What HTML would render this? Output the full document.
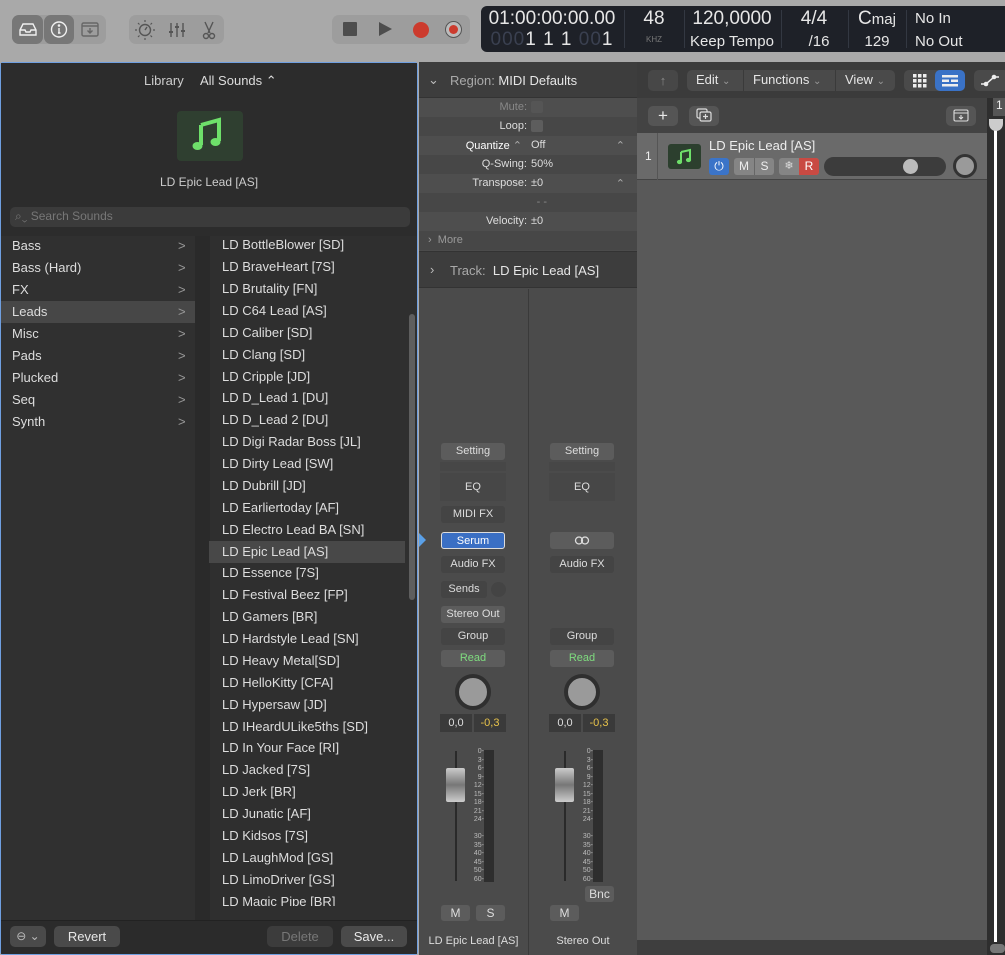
<!DOCTYPE html>
<html><head><meta charset="utf-8"><style>
*{box-sizing:border-box;margin:0;padding:0}
body{width:1005px;height:955px;overflow:hidden;background:#a9a9a9;font-family:"Liberation Sans",sans-serif;position:relative;color:#ddd}
.a{position:absolute}
.grp{position:absolute;background:#9d9d9d;border-radius:7px}
.lcd{position:absolute;left:481px;top:6px;width:530px;height:46px;background:#1e2128;border-radius:6px;color:#e6e6e6}
.lcd .c{position:absolute;text-align:center;font-size:17px}
.sep{position:absolute;top:4px;width:1px;height:38px;background:#333842}
.lib{position:absolute;left:0;top:62px;width:418px;height:893px;background:#2c2c2c;border:1px solid #6f9fe0;border-radius:3px}
.cat{position:absolute;left:12px;font-size:13px;color:#ddd}
.chev{position:absolute;left:178px;font-size:13px;color:#999}
.it{position:absolute;left:222px;font-size:13px;color:#ddd;white-space:nowrap}
.btn{position:absolute;background:#4a4a4a;border-radius:5px;font-size:13px;text-align:center;color:#e8e8e8}
.insp{position:absolute;left:419px;top:62px;width:218px;height:893px;background:#4b4b4b}
.row{position:absolute;left:0;width:218px;height:19px;font-size:11px;color:#ddd}
.row .l{position:absolute;right:110px;top:3px;text-align:right;white-space:nowrap}
.row .v{position:absolute;left:112px;top:3px}
.sb{position:absolute;background:#5c5c5c;border-radius:3px;font-size:11px;text-align:center;color:#ddd;height:17px;line-height:17px}
.sbd{position:absolute;background:#444;border-radius:3px;font-size:11px;text-align:center;color:#ddd;height:17px;line-height:17px}
.scale{position:absolute;font-size:7px;color:#bbb;text-align:right;width:14px;line-height:8.5px}
.tr{position:absolute;left:637px;top:62px;width:368px;height:893px;background:#595959}
.knob{position:absolute;width:36px;height:36px;border-radius:50%;border:4px solid #2f2f2f;background:#9a9a9a}
</style></head><body>
<!-- toolbar -->
<div class="grp" style="left:12px;top:15px;width:94px;height:29px"></div>
<div class="a" style="left:12px;top:15px;width:31px;height:29px;background:#777;border-radius:7px"></div>
<div class="a" style="left:44px;top:15px;width:30px;height:29px;background:#777;border-radius:7px"></div>
<svg class="a" style="left:12px;top:15px" width="94" height="29" fill="none" stroke="#f0f0f0" stroke-width="1.4">
<path d="M8 15 L11 9 H21 L24 15 V20 H8 Z M8 15 H13 L14 17 H18 L19 15 H24"/>
<circle cx="47" cy="14.5" r="7.5"/><path d="M47 13 V18 M46 18 H48.5" /><circle cx="47" cy="10.5" r=".6" fill="#fff"/>
<rect x="70" y="8" width="16" height="13" rx="1.5" stroke="#666"/><path d="M70 11 H86 M78 13 V18 M75.5 15.5 L78 18 L80.5 15.5" stroke="#666"/>
</svg>
<div class="grp" style="left:129px;top:15px;width:95px;height:29px"></div>
<svg class="a" style="left:129px;top:15px" width="95" height="29" fill="none" stroke="#555" stroke-width="1.4">
<circle cx="16" cy="15" r="5.5"/><path d="M16 15 L18 12"/><path d="M16 5v2M16 23v2M6 15h2M24 15h2M9 8l1.5 1.5M23 8l-1.5 1.5M9 22l1.5-1.5M23 22l-1.5-1.5" stroke-width="1.2"/>
<path d="M42 8v14M48 8v14M54 8v14"/><path d="M40 17h4M46 12h4M52 16h4" stroke-width="2"/>
<path d="M76 7 L81 18 M84 7 L79 18"/><circle cx="77" cy="21" r="2.5"/><circle cx="83" cy="21" r="2.5"/>
</svg>
<div class="grp" style="left:332px;top:15px;width:138px;height:29px"></div>
<div class="a" style="left:343px;top:22px;width:14px;height:14px;background:#4d4d4d;border-radius:1px"></div>
<svg class="a" style="left:378px;top:21px" width="16" height="16"><path d="M1 1 L14 8 L1 15Z" fill="#4d4d4d"/></svg>
<div class="a" style="left:413px;top:22px;width:16px;height:16px;border-radius:50%;background:#cc3b2e"></div>
<div class="a" style="left:445px;top:21px;width:17px;height:17px;border-radius:50%;border:1.5px solid #555;background:#bbb"></div>
<div class="a" style="left:449px;top:25px;width:9px;height:9px;border-radius:50%;background:#cc3b2e"></div>
<!-- LCD -->
<div class="lcd">
<div class="c" style="left:6px;top:2px;width:130px;font-size:19px">01:00:00:00.00</div>
<div class="c" style="left:6px;top:23px;width:130px;font-size:19px;letter-spacing:1px"><span style="color:#3a4050">000</span>1 1 1 <span style="color:#3a4050">00</span>1</div>
<div class="sep" style="left:143px"></div>
<div class="c" style="left:145px;top:2px;width:56px;font-size:19px">48</div>
<div class="c" style="left:145px;top:29px;width:56px;font-size:8px;color:#777">KHZ</div>
<div class="sep" style="left:203px"></div>
<div class="c" style="left:203px;top:2px;width:96px;font-size:19px">120,0000</div>
<div class="c" style="left:203px;top:27px;width:96px;font-size:15px">Keep Tempo</div>
<div class="sep" style="left:300px"></div>
<div class="c" style="left:300px;top:2px;width:66px;font-size:19px">4/4</div>
<div class="c" style="left:305px;top:27px;width:66px;font-size:15px">/16</div>
<div class="sep" style="left:367px"></div>
<div class="c" style="left:367px;top:2px;width:58px;font-size:19px">C<span style="font-size:15px">maj</span></div>
<div class="c" style="left:367px;top:27px;width:58px;font-size:15px">129</div>
<div class="sep" style="left:425px"></div>
<div class="c" style="left:434px;top:4px;font-size:15px;text-align:left">No In</div>
<div class="c" style="left:434px;top:27px;font-size:15px;text-align:left">No Out</div>
</div>

<!-- Library -->
<div class="lib">
<div class="a" style="left:0;top:0;width:416px;height:172px;background:#2c2c2c"></div>
<div class="a" style="left:143px;top:10px;font-size:13px;color:#ccc">Library</div>
<div class="a" style="left:199px;top:10px;font-size:13px;color:#ddd">All Sounds ⌃</div>
<div class="a" style="left:176px;top:48px;width:66px;height:50px;background:#2f3f30;border-radius:4px"></div>
<svg class="a" style="left:189px;top:52px" width="40" height="40"><path d="M11 10 L29 5 V26" stroke="#6ee06a" stroke-width="4" fill="none"/><path d="M11 10 V30" stroke="#6ee06a" stroke-width="4"/><ellipse cx="7.5" cy="31" rx="5" ry="4" fill="#6ee06a"/><ellipse cx="25.5" cy="27" rx="5" ry="4" fill="#6ee06a"/></svg>
<div class="a" style="left:0;top:112px;width:416px;text-align:center;font-size:12px;color:#ccc">LD Epic Lead [AS]</div>
<div class="a" style="left:9px;top:144px;width:400px;height:20px;background:#3b3b3b;border-radius:5px"></div>
<div class="a" style="left:14px;top:146px;font-size:12px;color:#777">⌕⌄ Search Sounds</div>
<div class="a" style="left:0;top:173px;width:194px;height:684px;background:#303030"></div>
<div class="a" style="left:194px;top:173px;width:15px;height:684px;background:#2a2a2a"></div>
<div class="a" style="left:209px;top:173px;width:207px;height:684px;background:#2f2f2f"></div>
<div class="a" style="left:0;top:238px;width:194px;height:22px;background:#474747"></div>
<div class="a" style="left:208px;top:478px;width:196px;height:22px;background:#484848"></div>
<div class="a" style="left:408px;top:251px;width:6px;height:286px;background:#5e5e5e;border-radius:3px"></div>
<div class="a" style="left:0;top:857px;width:416px;height:34px;background:#2b2b2b;border-top:1px solid #222"></div>
</div>
<div class="cat" style="top:238px">Bass</div><div class="cat" style="top:260px">Bass (Hard)</div><div class="cat" style="top:282px">FX</div><div class="cat" style="top:304px">Leads</div><div class="cat" style="top:326px">Misc</div><div class="cat" style="top:348px">Pads</div><div class="cat" style="top:370px">Plucked</div><div class="cat" style="top:392px">Seq</div><div class="cat" style="top:414px">Synth</div>
<div class="chev" style="top:238px">&gt;</div><div class="chev" style="top:260px">&gt;</div><div class="chev" style="top:282px">&gt;</div><div class="chev" style="top:304px">&gt;</div><div class="chev" style="top:326px">&gt;</div><div class="chev" style="top:348px">&gt;</div><div class="chev" style="top:370px">&gt;</div><div class="chev" style="top:392px">&gt;</div><div class="chev" style="top:414px">&gt;</div>
<div class="it" style="top:237px">LD BottleBlower [SD]</div>
<div class="it" style="top:259px">LD BraveHeart [7S]</div>
<div class="it" style="top:281px">LD Brutality [FN]</div>
<div class="it" style="top:303px">LD C64 Lead [AS]</div>
<div class="it" style="top:325px">LD Caliber [SD]</div>
<div class="it" style="top:347px">LD Clang [SD]</div>
<div class="it" style="top:369px">LD Cripple [JD]</div>
<div class="it" style="top:390px">LD D_Lead 1 [DU]</div>
<div class="it" style="top:412px">LD D_Lead 2 [DU]</div>
<div class="it" style="top:434px">LD Digi Radar Boss [JL]</div>
<div class="it" style="top:456px">LD Dirty Lead [SW]</div>
<div class="it" style="top:478px">LD Dubrill [JD]</div>
<div class="it" style="top:500px">LD Earliertoday [AF]</div>
<div class="it" style="top:522px">LD Electro Lead BA [SN]</div>
<div class="it" style="top:544px">LD Epic Lead [AS]</div>
<div class="it" style="top:565px">LD Essence [7S]</div>
<div class="it" style="top:587px">LD Festival Beez [FP]</div>
<div class="it" style="top:609px">LD Gamers [BR]</div>
<div class="it" style="top:631px">LD Hardstyle Lead [SN]</div>
<div class="it" style="top:653px">LD Heavy Metal[SD]</div>
<div class="it" style="top:675px">LD HelloKitty [CFA]</div>
<div class="it" style="top:697px">LD Hypersaw [JD]</div>
<div class="it" style="top:719px">LD IHeardULike5ths [SD]</div>
<div class="it" style="top:740px">LD In Your Face [RI]</div>
<div class="it" style="top:762px">LD Jacked [7S]</div>
<div class="it" style="top:784px">LD Jerk [BR]</div>
<div class="it" style="top:806px">LD Junatic [AF]</div>
<div class="it" style="top:828px">LD Kidsos [7S]</div>
<div class="it" style="top:850px">LD LaughMod [GS]</div>
<div class="it" style="top:872px">LD LimoDriver [GS]</div>
<div class="it" style="top:894px;height:12px;overflow:hidden">LD Magic Pipe [BR]</div>
<div class="btn" style="left:10px;top:926px;width:36px;height:21px;line-height:21px;font-size:12px;color:#bbb">⊖ ⌄</div>
<div class="btn" style="left:54px;top:926px;width:66px;height:21px;line-height:21px">Revert</div>
<div class="btn" style="left:267px;top:926px;width:66px;height:21px;line-height:21px;background:#3c3c3c;color:#777">Delete</div>
<div class="btn" style="left:341px;top:926px;width:66px;height:21px;line-height:21px">Save...</div>

<!-- Inspector -->
<div class="insp">
<div class="a" style="left:0;top:0;width:218px;height:36px;background:#3d3d3d;border-bottom:1px solid #333"></div>
<div class="a" style="left:9px;top:10px;font-size:13px;color:#bbb">⌄</div>
<div class="a" style="left:31px;top:11px;font-size:13px;color:#aaa">Region: <span style="color:#e6e6e6">MIDI Defaults</span></div>
<div class="row" style="top:36px;background:#4e4e4e"><span class="l" style="color:#888">Mute:</span><span class="a" style="left:112px;top:3px;width:12px;height:12px;background:#555;border-radius:2px"></span></div>
<div class="row" style="top:55px;background:#474747"><span class="l">Loop:</span><span class="a" style="left:112px;top:3px;width:12px;height:12px;background:#5d5d5d;border-radius:2px"></span></div>
<div class="row" style="top:74px;background:#4e4e4e"><span class="l" style="color:#fff;right:115px">Quantize <span style="color:#aaa">⌃</span></span><span class="v">Off</span><span class="a" style="right:12px;top:3px;color:#aaa">⌃</span></div>
<div class="row" style="top:93px;background:#474747"><span class="l">Q-Swing:</span><span class="v">50%</span></div>
<div class="row" style="top:112px;background:#4e4e4e"><span class="l">Transpose:</span><span class="v">±0</span><span class="a" style="right:12px;top:3px;color:#aaa">⌃</span></div>
<div class="row" style="top:131px;background:#474747"><span class="l" style="right:90px;color:#888">- -</span></div>
<div class="row" style="top:150px;background:#4e4e4e"><span class="l">Velocity:</span><span class="v">±0</span></div>
<div class="row" style="top:169px;background:#474747"><span class="a" style="left:9px;top:3px;color:#999">›&nbsp; More</span></div>
<div class="a" style="left:0;top:189px;width:218px;height:37px;background:#3d3d3d;border-top:1px solid #333;border-bottom:1px solid #333"></div>
<div class="a" style="left:11px;top:200px;font-size:13px;color:#bbb">›</div>
<div class="a" style="left:31px;top:201px;font-size:13px;color:#aaa">Track:&nbsp; <span style="color:#e6e6e6">LD Epic Lead [AS]</span></div>
<div class="a" style="left:109px;top:227px;width:1px;height:666px;background:#3a3a3a"></div>
</div>
<!-- strip 1 -->
<div class="sb" style="left:441px;top:443px;width:64px">Setting</div>
<div class="a" style="left:440px;top:462px;width:66px;height:9px;background:#474747"></div>
<div class="a" style="left:440px;top:473px;width:66px;height:28px;background:#474747;font-size:11px;text-align:center;line-height:28px">EQ</div>
<div class="sbd" style="left:441px;top:506px;width:64px">MIDI FX</div>
<svg class="a" style="left:419px;top:533px" width="8" height="14"><path d="M0 0 L7 7 L0 14Z" fill="#5aa0e8"/></svg>
<div class="sb" style="left:441px;top:532px;width:64px;background:#3a6fc4;border:1px solid #ddd;color:#fff">Serum</div>
<div class="sbd" style="left:441px;top:556px;width:64px">Audio FX</div>
<div class="sbd" style="left:441px;top:581px;width:46px">Sends</div>
<div class="a" style="left:491px;top:582px;width:15px;height:15px;border-radius:50%;background:#444"></div>
<div class="sb" style="left:441px;top:606px;width:64px">Stereo Out</div>
<div class="sbd" style="left:441px;top:628px;width:64px">Group</div>
<div class="sb" style="left:441px;top:650px;width:64px;color:#7fdc7f">Read</div>
<div class="knob" style="left:455px;top:674px"></div>
<div class="a" style="left:440px;top:714px;width:32px;height:18px;background:#3a3a3a;font-size:11px;text-align:center;line-height:18px">0,0</div>
<div class="a" style="left:474px;top:714px;width:32px;height:18px;background:#3a3a3a;font-size:11px;text-align:center;line-height:18px;color:#e8c34a">-0,3</div>
<!-- strip 2 -->
<div class="sb" style="left:550px;top:443px;width:64px">Setting</div>
<div class="a" style="left:549px;top:462px;width:66px;height:9px;background:#474747"></div>
<div class="a" style="left:549px;top:473px;width:66px;height:28px;background:#474747;font-size:11px;text-align:center;line-height:28px">EQ</div>
<div class="sb" style="left:550px;top:532px;width:64px"></div>
<svg class="a" style="left:574px;top:536px" width="16" height="9" fill="none" stroke="#ddd" stroke-width="1.3"><circle cx="5" cy="4.5" r="3.5"/><circle cx="11" cy="4.5" r="3.5"/></svg>
<div class="sbd" style="left:550px;top:556px;width:64px">Audio FX</div>
<div class="sbd" style="left:550px;top:628px;width:64px">Group</div>
<div class="sb" style="left:550px;top:650px;width:64px;color:#7fdc7f">Read</div>
<div class="knob" style="left:564px;top:674px"></div>
<div class="a" style="left:549px;top:714px;width:32px;height:18px;background:#3a3a3a;font-size:11px;text-align:center;line-height:18px">0,0</div>
<div class="a" style="left:583px;top:714px;width:32px;height:18px;background:#3a3a3a;font-size:11px;text-align:center;line-height:18px;color:#e8c34a">-0,3</div>
<!-- faders -->
<div class="a" style="left:455px;top:751px;width:2px;height:130px;background:#2a2a2a"></div>
<div class="a" style="left:446px;top:768px;width:19px;height:34px;background:linear-gradient(#ccc,#777 50%,#ccc);border-radius:2px"></div>
<div class="scale" style="left:470px;top:748px">0-<br>3-<br>6-<br>9-<br>12-<br>15-<br>18-<br>21-<br>24-<br><br>30-<br>35-<br>40-<br>45-<br>50-<br>60-</div>
<div class="a" style="left:484px;top:750px;width:10px;height:132px;background:#2e2e2e"></div>
<div class="a" style="left:564px;top:751px;width:2px;height:130px;background:#2a2a2a"></div>
<div class="a" style="left:555px;top:768px;width:19px;height:34px;background:linear-gradient(#ccc,#777 50%,#ccc);border-radius:2px"></div>
<div class="scale" style="left:579px;top:748px">0-<br>3-<br>6-<br>9-<br>12-<br>15-<br>18-<br>21-<br>24-<br><br>30-<br>35-<br>40-<br>45-<br>50-<br>60-</div>
<div class="a" style="left:593px;top:750px;width:10px;height:132px;background:#2e2e2e"></div>
<div class="sb" style="left:585px;top:886px;width:29px;height:16px;font-size:12px">Bnc</div>
<div class="sb" style="left:441px;top:905px;width:29px;height:16px;font-size:12px">M</div>
<div class="sb" style="left:476px;top:905px;width:29px;height:16px;font-size:12px">S</div>
<div class="sb" style="left:550px;top:905px;width:29px;height:16px;font-size:12px">M</div>
<div class="a" style="left:419px;top:935px;width:109px;text-align:center;font-size:11px">LD Epic Lead [AS]</div>
<div class="a" style="left:529px;top:935px;width:108px;text-align:center;font-size:11px">Stereo Out</div>

<!-- Tracks -->
<div class="tr">
<div class="a" style="left:0;top:0;width:368px;height:36px;background:#3b3b3b"></div>
<div class="a" style="left:0;top:36px;width:350px;height:35px;background:#434343"></div>
<div class="a" style="left:0;top:71px;width:350px;height:47px;background:#6a6a6a;border-bottom:1px solid #444"></div>
<div class="a" style="left:20px;top:71px;width:1px;height:47px;background:#555"></div>
<div class="a" style="left:0;top:878px;width:350px;height:15px;background:#3e3e3e"></div>
<div class="a" style="left:350px;top:36px;width:18px;height:857px;background:#2e2e2e"></div>
<div class="a" style="left:356px;top:36px;width:12px;height:18px;background:#555;font-size:12px;color:#eee;padding-left:3px">1</div>
<div class="a" style="left:357px;top:60px;width:3px;height:820px;background:#fff"></div>
<div class="a" style="left:352px;top:57px;width:14px;height:12px;background:#ccc;border-radius:0 0 7px 7px"></div>
<div class="a" style="left:353px;top:882px;width:15px;height:9px;background:#777;border-radius:4px"></div>
</div>
<div class="btn" style="left:648px;top:70px;width:30px;height:21px;background:#474747;color:#888;line-height:21px">↑</div>
<div class="btn" style="left:687px;top:70px;width:208px;height:21px;background:#4a4a4a"></div>
<div class="a" style="left:696px;top:72px;font-size:13px;color:#e6e6e6">Edit <span style="color:#999;font-size:10px">⌄</span></div>
<div class="a" style="left:743px;top:70px;width:1px;height:21px;background:#3a3a3a"></div>
<div class="a" style="left:753px;top:72px;font-size:13px;color:#e6e6e6">Functions <span style="color:#999;font-size:10px">⌄</span></div>
<div class="a" style="left:835px;top:70px;width:1px;height:21px;background:#3a3a3a"></div>
<div class="a" style="left:845px;top:72px;font-size:13px;color:#e6e6e6">View <span style="color:#999;font-size:10px">⌄</span></div>
<div class="btn" style="left:904px;top:70px;width:61px;height:21px;background:#4a4a4a"></div>
<div class="btn" style="left:935px;top:70px;width:30px;height:21px;background:#3a72c6"></div>
<svg class="a" style="left:913px;top:74px" width="14" height="14" fill="#eee"><rect x="0" y="0" width="3.5" height="3.5"/><rect x="5" y="0" width="3.5" height="3.5"/><rect x="10" y="0" width="3.5" height="3.5"/><rect x="0" y="5" width="3.5" height="3.5"/><rect x="5" y="5" width="3.5" height="3.5"/><rect x="10" y="5" width="3.5" height="3.5"/><rect x="0" y="10" width="3.5" height="3.5"/><rect x="5" y="10" width="3.5" height="3.5"/><rect x="10" y="10" width="3.5" height="3.5"/></svg>
<svg class="a" style="left:942px;top:75px" width="16" height="12" fill="#eee"><rect x="0" y="0" width="16" height="2.5"/><rect x="0" y="4.5" width="7" height="2.5"/><rect x="9" y="4.5" width="7" height="2.5"/><rect x="0" y="9" width="16" height="2.5"/></svg>
<div class="btn" style="left:974px;top:70px;width:35px;height:21px;background:#4a4a4a"></div>
<svg class="a" style="left:980px;top:73px" width="20" height="15"><path d="M1 11 H6 L14 4 H19" stroke="#eee" stroke-width="1.5" fill="none"/><circle cx="6" cy="11" r="2.3" fill="#eee"/><circle cx="14" cy="4" r="2.3" fill="#eee"/></svg>
<div class="btn" style="left:648px;top:106px;width:30px;height:20px;background:#555;font-size:17px;line-height:19px">+</div>
<div class="btn" style="left:689px;top:106px;width:30px;height:20px;background:#555"></div>
<svg class="a" style="left:696px;top:108px" width="16" height="15" fill="none" stroke="#ddd" stroke-width="1.2"><rect x="1" y="1" width="10" height="9" rx="1.5"/><rect x="4" y="4" width="11" height="9" rx="1.5" fill="#555"/><path d="M9.5 6v5M7 8.5h5"/></svg>
<div class="btn" style="left:946px;top:106px;width:30px;height:20px;background:#555"></div>
<svg class="a" style="left:953px;top:109px" width="16" height="13" fill="none" stroke="#ddd" stroke-width="1.1"><rect x="1" y="1" width="14" height="11" rx="1.5"/><path d="M1 4h14M8 6v4M6 8l2 2 2-2"/></svg>
<div class="a" style="left:645px;top:149px;font-size:12px;color:#eee">1</div>
<div class="a" style="left:668px;top:144px;width:33px;height:25px;background:#2c3f2e;border-radius:3px"></div>
<svg class="a" style="left:676px;top:147px" width="18" height="19"><path d="M5 5 L14 3 V13 M5 5 V15" stroke="#6ee06a" stroke-width="2" fill="none"/><ellipse cx="3.5" cy="15" rx="2.6" ry="2.1" fill="#6ee06a"/><ellipse cx="12.5" cy="13" rx="2.6" ry="2.1" fill="#6ee06a"/></svg>
<div class="a" style="left:709px;top:138px;font-size:13px;color:#eee">LD Epic Lead [AS]</div>
<div class="a" style="left:709px;top:158px;width:20px;height:17px;background:#3b74c8;border-radius:3px;color:#fff;font-size:12px;text-align:center;line-height:17px">⏻</div>
<div class="a" style="left:734px;top:158px;width:40px;height:17px;background:#858585;border-radius:3px"></div>
<div class="a" style="left:734px;top:158px;width:20px;font-size:12px;text-align:center;line-height:17px;color:#eee">M</div>
<div class="a" style="left:754px;top:158px;width:20px;font-size:12px;text-align:center;line-height:17px;color:#eee;border-left:1px solid #666">S</div>
<div class="a" style="left:779px;top:158px;width:40px;height:17px;background:#858585;border-radius:3px"></div>
<div class="a" style="left:779px;top:158px;width:20px;font-size:11px;text-align:center;line-height:17px;color:#ddd">❄</div>
<div class="a" style="left:799px;top:158px;width:20px;height:17px;background:#c94a43;border-radius:0 3px 3px 0;font-size:12px;text-align:center;line-height:17px;color:#fff">R</div>
<div class="a" style="left:824px;top:157px;width:122px;height:19px;background:#3c3c3c;border-radius:10px"></div>
<div class="a" style="left:903px;top:159px;width:15px;height:15px;background:#bbb;border-radius:50%"></div>
<div class="a" style="left:953px;top:154px;width:24px;height:24px;border-radius:50%;border:3px solid #333;background:#9a9a9a"></div>
</body></html>
